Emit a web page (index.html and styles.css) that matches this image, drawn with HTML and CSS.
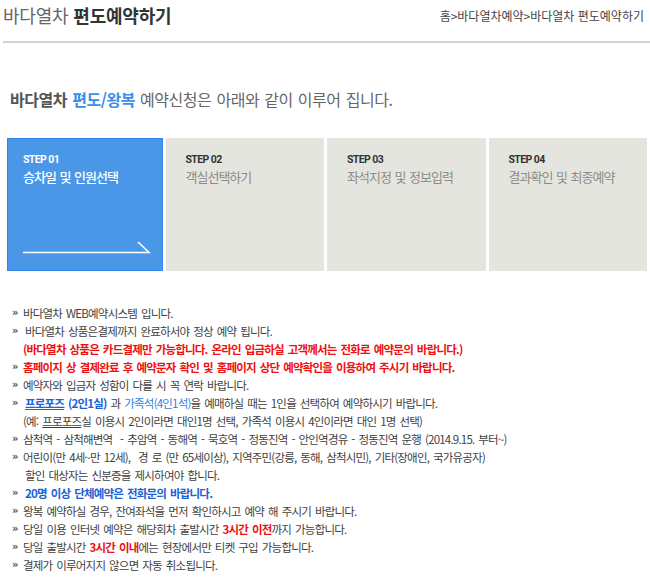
FILE: index.html
```html
<!DOCTYPE html>
<html lang="ko">
<head>
    <meta charset="UTF-8">
    <title>바다열차 편도예약하기</title>
    <link rel="stylesheet" href="styles.css">
</head>
<body>
    <div class="page-head">
        <h1><span class="h-light">바다열차</span> 편도예약하기</h1>
        <div class="location">홈&gt;바다열차예약&gt;바다열차 편도예약하기</div>
    </div>

    <p class="intro"><strong>바다열차</strong> <strong class="blue">편도/왕복</strong> 예약신청은 아래와 같이 이루어 집니다.</p>

    <div class="steps">
        <div class="step on">
            <div class="step-no">STEP 01</div>
            <div class="step-name">승차일 및 인원선택</div>
            <svg class="step-arrow" width="128" height="14" viewBox="0 0 128 14">
                <path d="M0 12.5 H126 L115 2" fill="none" stroke="#fff" stroke-width="1.6"/>
            </svg>
        </div>
        <div class="step">
            <div class="step-no">STEP 02</div>
            <div class="step-name">객실선택하기</div>
        </div>
        <div class="step">
            <div class="step-no">STEP 03</div>
            <div class="step-name">좌석지정 및 정보입력</div>
        </div>
        <div class="step">
            <div class="step-no">STEP 04</div>
            <div class="step-name">결과확인 및 최종예약</div>
        </div>
    </div>

    <ul class="notice">
        <li>바다열차 WEB예약시스템 입니다.</li>
        <li><span class="sp"></span>바다열차 상품은결제까지 완료하서야 정상 예약 됩니다.</li>
        <li class="nob red">(바다열차 상품은 카드결제만 가능합니다. 온라인 입금하실 고객께서는 전화로 예약문의 바랍니다.)</li>
        <li class="red">홈페이지 상 결제완료 후 예약문자 확인 및 홈페이지 상단 예약확인을 이용하여 주시기 바랍니다.</li>
        <li>예약자와 입금자 성함이 다를 시 꼭 연락 바랍니다.</li>
        <li><span class="sp"></span><span class="blue-b"><u>프로포즈</u> (2인1실)</span> 과 <span class="blue-l">가족석(4인1석)</span>을 예매하실 때는 1인을 선택하여 예약하시기 바랍니다.</li>
        <li class="nob">(예: <u>프로포즈</u>실 이용시 2인이라면 대인1명 선택, 가족석 이용시 4인이라면 대인 1명 선택)</li>
        <li>삼척역 - 삼척해변역 &nbsp;- 추암역 - 동해역 - 묵호역 - 정동진역 - 안인역경유 - 정동진역 운행 (2014.9.15. 부터~)</li>
        <li>어린이(만 4세~만 12세), &nbsp;경 로 (만 65세이상), 지역주민(강릉, 동해, 삼척시민), 기타(장애인, 국가유공자)<br><span class="sp"></span>할인 대상자는 신분증을 제시하여야 합니다.</li>
        <li><span class="sp"></span><span class="blue-b">20명 이상 단체예약은 전화문의 바랍니다.</span></li>
        <li>왕복 예약하실 경우, 잔여좌석을 먼저 확인하시고 예약 해 주시기 바랍니다.</li>
        <li>당일 이용 인터넷 예약은 해당회차 출발시간 <b class="red">3시간 이전</b>까지 가능합니다.</li>
        <li>당일 출발시간 <b class="red">3시간 이내</b>에는 현장에서만 티켓 구입 가능합니다.</li>
        <li>결제가 이루어지지 않으면 자동 취소됩니다.</li>
    </ul>
</body>
</html>
```

FILE: styles.css
```css
body {
    margin: 0;
    font-family: "Noto Sans CJK KR", sans-serif;
    color: #444;
    background: #fff;
    width: 650px;
}
.page-head {
    display: flex;
    justify-content: space-between;
    align-items: flex-start;
    height: 41px;
    margin-left: 3px;
    padding-right: 6px;
    border-bottom: 2px solid #d2d2d2;
}
.page-head h1 {
    margin: 0;
    font-size: 18px;
    line-height: 30px;
    letter-spacing: -0.2px;
    font-weight: bold;
    color: #333;
}
.h-light {
    font-weight: normal;
    color: #666;
}
.location {
    margin-top: 8px;
    font-size: 12px;
    line-height: 16px;
    letter-spacing: 0;
    color: #444;
}
.intro {
    margin: 44px 0 0;
    padding-left: 10px;
    font-size: 16px;
    line-height: 24px;
    letter-spacing: -0.45px;
    word-spacing: 1px;
    color: #666;
}
.intro strong {
    color: #555;
}
.intro .blue {
    color: #3a8fe8;
}
.steps {
    display: flex;
    gap: 3px;
    width: 640px;
    margin: 27px 0 0 7px;
}
.step {
    flex: 1;
    height: 133px;
    box-sizing: border-box;
    padding: 15px 10px 17px 20px;
    background: #e5e5e0;
    display: flex;
    flex-direction: column;
}
.step-no {
    font-family: Roboto, sans-serif;
    font-weight: bold;
    font-size: 10.5px;
    line-height: 13px;
    letter-spacing: -0.6px;
    color: #333;
}
.step-name {
    margin-top: 3px;
    font-size: 13px;
    line-height: 16px;
    letter-spacing: -1px;
    word-spacing: 1px;
    color: #8c8c84;
}
.step.on {
    background: #4a97e7;
    border: 1px solid #2f86ea;
    padding: 14px 10px 16px 15px;
}
.step.on .step-no {
    color: #fff;
}
.step.on .step-name {
    color: #fff;
    font-weight: 500;
}
.step-arrow {
    margin-top: auto;
    display: block;
}
.notice {
    list-style: none;
    margin: 33px 0 0;
    padding: 0 0 0 23px;
    font-size: 11.5px;
    line-height: 18px;
    letter-spacing: -0.8px;
    word-spacing: 1.5px;
    color: #3f3f3f;
}
.notice li::before {
    content: "»";
    display: inline-block;
    vertical-align: top;
    width: 11px;
    margin-left: -11px;
    font-family: "DejaVu Sans", sans-serif;
    font-weight: bold;
    font-size: 10px;
    line-height: 17px;
    letter-spacing: 0;
    color: #555;
}
.notice li.nob::before {
    content: none;
}
.notice .sp {
    display: inline-block;
    width: 2px;
}
.red {
    color: #ee1111;
    font-weight: bold;
}
.blue-b {
    color: #1a62d6;
    font-weight: bold;
}
.blue-l {
    color: #2f80e2;
}
```
